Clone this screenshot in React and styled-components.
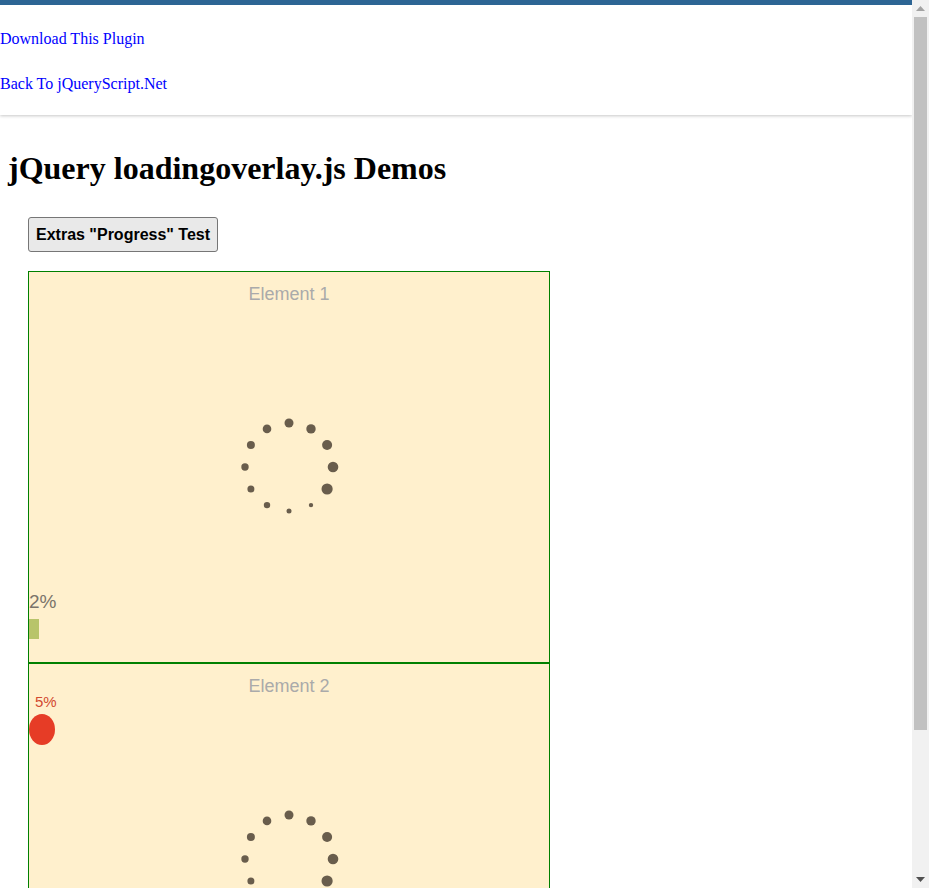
import React from 'react';
import styled, { createGlobalStyle } from 'styled-components';

const GlobalStyle = createGlobalStyle`
    html, body {
        margin: 0;
        padding: 0;
        background: #fff;
    }
    body {
        font-family: "Liberation Serif", "Times New Roman", serif;
        font-size: 16px;
    }
`;

const Viewport = styled.div`
    display: flex;
    height: 100vh;
    overflow: hidden;
`;

const Page = styled.div`
    flex: 1;
    min-width: 0;
    overflow: hidden;
`;

const ScrollBar = styled.div`
    flex: none;
    width: 17px;
    display: flex;
    flex-direction: column;
    background: #f1f1f1;
`;

const ArrowButton = styled.div`
    height: 17px;
    display: flex;
    align-items: center;
    justify-content: center;
`;

const Track = styled.div`
    flex: 1;
    padding: 0 2px;
`;

const Thumb = styled.div`
    height: ${p => p.$size}px;
    background: #c1c1c1;
`;

const Header = styled.header`
    border-top: 5px solid #2d6594;
    padding: 25px 0 22px;
    background: #fff;
    box-shadow: 0 1px 3px rgba(0, 0, 0, 0.22);
`;

const TopLink = styled.a`
    display: block;
    line-height: 18px;
    color: blue;
    text-decoration: none;
    & + & {
        margin-top: 27px;
    }
`;

const Main = styled.main`
    margin: 0 8px 8px;
`;

const Title = styled.h1`
    margin: 35px 0 30px;
    font-size: 32px;
    font-weight: bold;
`;

const Demo = styled.div`
    padding-left: 20px;
`;

const Button = styled.button`
    font-family: "Liberation Sans", Arial, sans-serif;
    font-weight: bold;
    font-size: 16px;
    line-height: 18px;
    padding: 8px 7px 7px;
    color: #000;
    background: #e9e9e9;
    border: 1px solid #767676;
    border-radius: 3px;
    margin-bottom: 19px;
`;

const Box = styled.div`
    position: relative;
    width: 520px;
    height: 390px;
    border: 1px solid green;
    background: #fff0cd;
    font-family: "Liberation Sans", Arial, sans-serif;
`;

const BoxTitle = styled.div`
    padding-top: 12px;
    text-align: center;
    font-size: 18px;
    color: #aaa;
`;

const Overlay = styled.div`
    position: absolute;
    inset: 0;
    display: flex;
    align-items: center;
    justify-content: center;
`;

const BarGroup = styled.div`
    position: absolute;
    left: 0;
    bottom: 23px;
    display: flex;
    flex-direction: column;
    gap: 6px;
`;

const BarText = styled.div`
    font-size: 19px;
    line-height: 22px;
    color: #7a746a;
`;

const Bar = styled.div`
    height: 20px;
    background: #b8c46a;
`;

const CircleGroup = styled.div`
    position: absolute;
    left: 0;
    top: 29px;
    display: flex;
    flex-direction: column;
    gap: 4px;
`;

const CircleText = styled.div`
    padding-left: 6px;
    font-size: 15px;
    line-height: 17px;
    color: #d24a30;
`;

const Circle = styled.div`
    width: 26px;
    height: 31px;
    border-radius: 50%;
    background: #e63c26;
`;

const radii = [4.5, 4.7, 5, 5.3, 5.6, 2.2, 2.5, 3.2, 3.5, 3.7, 4, 4.3];

const Spinner = () => (
    <svg width="100" height="100" viewBox="0 0 100 100">
        {radii.map((r, i) => {
            const a = (i * Math.PI) / 6;
            return (
                <circle
                    key={i}
                    cx={50 + 44 * Math.sin(a)}
                    cy={50 - 44 * Math.cos(a)}
                    r={r}
                    fill="#695d4c"
                />
            );
        })}
    </svg>
);

const App = () => (
    <Viewport>
        <GlobalStyle />
        <Page>
            <Header>
                <TopLink href="#">Download This Plugin</TopLink>
                <TopLink href="#">Back To jQueryScript.Net</TopLink>
            </Header>
            <Main>
                <Title>jQuery loadingoverlay.js Demos</Title>
                <Demo>
                    <Button>Extras "Progress" Test</Button>
                    <Box>
                        <BoxTitle>Element 1</BoxTitle>
                        <Overlay>
                            <Spinner />
                            <BarGroup>
                                <BarText>2%</BarText>
                                <Bar style={{ width: '10px' }} />
                            </BarGroup>
                        </Overlay>
                    </Box>
                    <Box>
                        <BoxTitle>Element 2</BoxTitle>
                        <Overlay>
                            <Spinner />
                            <CircleGroup>
                                <CircleText>5%</CircleText>
                                <Circle />
                            </CircleGroup>
                        </Overlay>
                    </Box>
                </Demo>
            </Main>
        </Page>
        <ScrollBar>
            <ArrowButton>
                <svg width="9" height="5" viewBox="0 0 9 5">
                    <polygon points="4.5,0 9,5 0,5" fill="#a3a3a3" />
                </svg>
            </ArrowButton>
            <Track>
                <Thumb $size={713} />
            </Track>
            <ArrowButton>
                <svg width="9" height="5" viewBox="0 0 9 5">
                    <polygon points="0,0 9,0 4.5,5" fill="#505050" />
                </svg>
            </ArrowButton>
        </ScrollBar>
    </Viewport>
);

export default App;
